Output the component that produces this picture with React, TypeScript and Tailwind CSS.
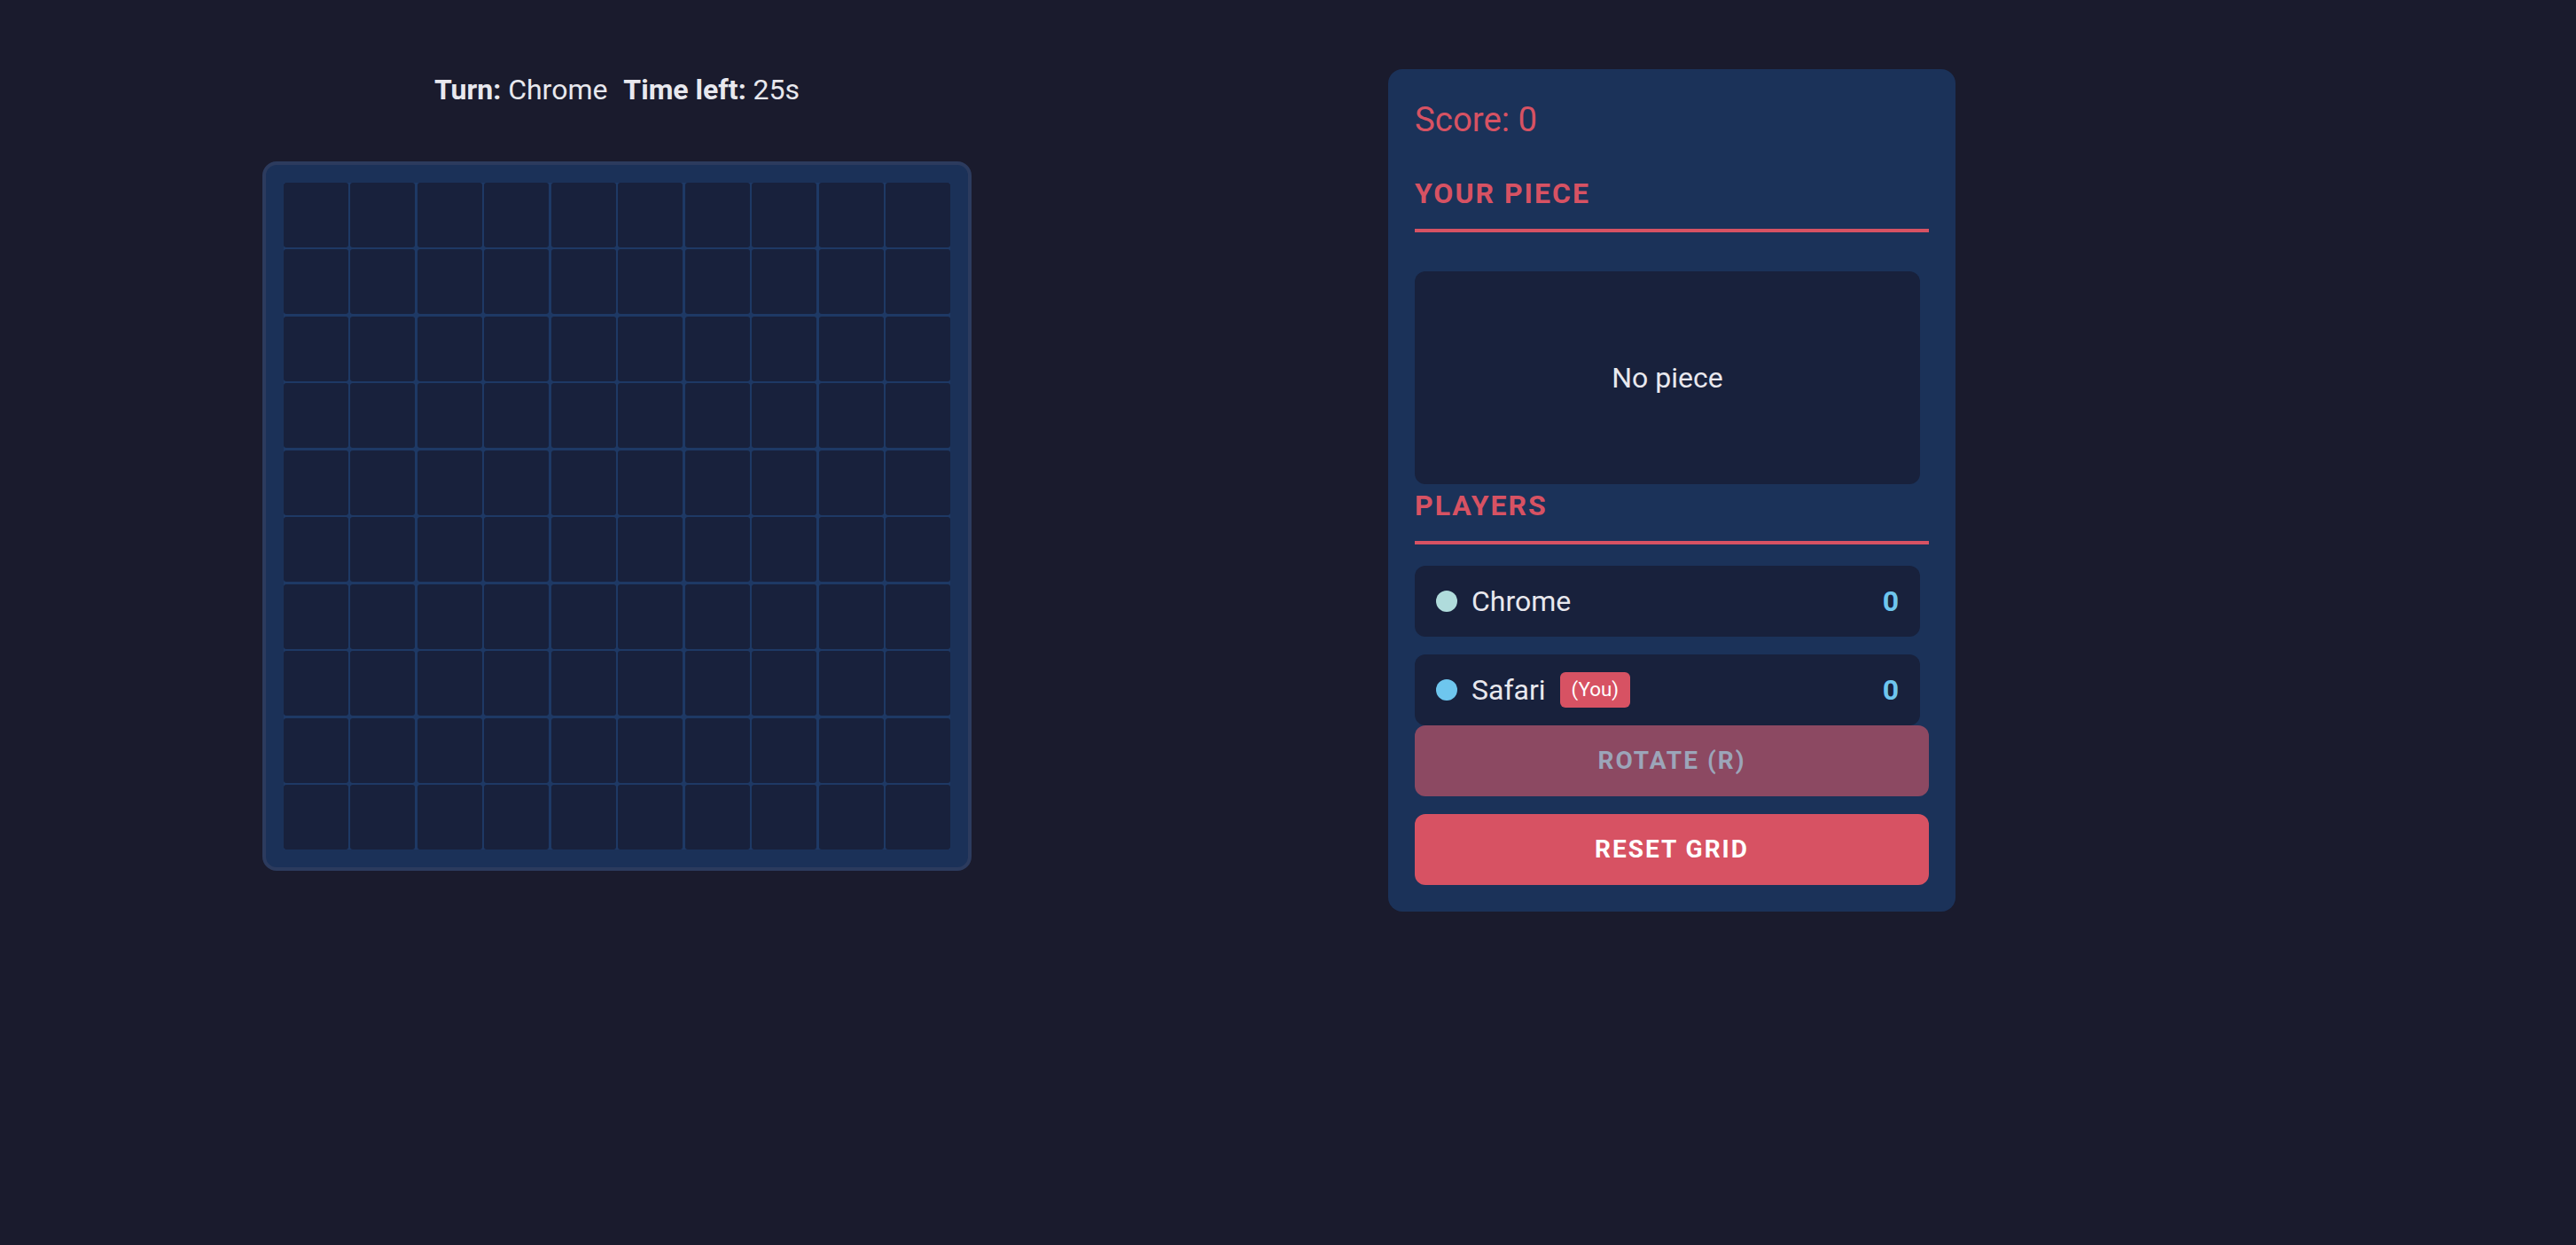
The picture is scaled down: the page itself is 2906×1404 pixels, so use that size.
import React from 'react';

const pink = 'text-[#d75263]';

type Player = { name: string; color: string; score: number; you?: boolean };

const players: Player[] = [
  { name: 'Chrome', color: 'bg-[#b0dcdc]', score: 0 },
  { name: 'Safari', color: 'bg-[#6ec6ee]', score: 0, you: true },
];

function Board() {
  const cells = Array.from({ length: 100 }, (_, i) => i);
  return (
    <div className="mt-[61px] h-[800px] w-[800px] rounded-[16px] border-4 border-[#2c3b5e] bg-[#1b3158] p-[20px]">
      <div className="grid h-full w-full grid-cols-10 grid-rows-10 gap-[2.5px] bg-[#1e3965]">
        {cells.map((i) => (
          <div key={i} className="rounded-[3px] bg-[#18213c]" />
        ))}
      </div>
    </div>
  );
}

function SectionTitle({ children, className = '' }: { children: React.ReactNode; className?: string }) {
  return (
    <h2
      className={`border-b-4 border-[#d75263] pb-[20px] text-[32px] font-bold uppercase leading-[40px] tracking-[2px] ${pink} ${className}`}
    >
      {children}
    </h2>
  );
}

function PlayerRow({ player }: { player: Player }) {
  return (
    <div className="flex h-[80px] w-[570px] items-center rounded-[12px] bg-[#18213c] px-6">
      <span className={`h-6 w-6 rounded-full ${player.color}`} />
      <span className="ml-4 text-[32px] leading-[40px] text-[#e8e8ee]">{player.name}</span>
      {player.you && (
        <span className="ml-4 flex h-[40px] items-center rounded-[6px] bg-[#d75263] px-[13px] text-[22.4px] text-white">
          (You)
        </span>
      )}
      <span className="ml-auto text-[32px] font-bold leading-[40px] text-[#6ec6ee]">{player.score}</span>
    </div>
  );
}

export default function App() {
  return (
    <div className="min-h-screen bg-[#1a1b2d] font-['Roboto',sans-serif] text-[#e8e8ee]">
      <div className="flex items-start">
        <div className="flex w-[1392px] flex-col items-center pt-[81px]">
          <p className="text-[32px] leading-[40px]">
            <span className="font-bold">Turn:</span> Chrome <span className="ml-[10px] font-bold">Time left:</span> 25s
          </p>
          <Board />
        </div>

        <aside className="ml-[174px] mt-[78px] w-[640px] rounded-[16px] bg-[#1b3259] p-[30px]">
          <div className={`mt-[4px] text-[38.4px] leading-[46px] ${pink}`}>Score: 0</div>

          <SectionTitle className="mt-[40px]">Your Piece</SectionTitle>
          <div className="mt-[44px] flex h-[240px] w-[570px] items-center justify-center rounded-[12px] bg-[#18213c] text-[32px] leading-[40px] text-[#e8e8ee]">
            No piece
          </div>

          <SectionTitle className="mt-[4px]">Players</SectionTitle>
          <div className="mt-[24px] flex flex-col gap-[20px]">
            {players.map((p) => (
              <PlayerRow key={p.name} player={p} />
            ))}
          </div>

          <button
            type="button"
            disabled
            className="flex h-[80px] w-full items-center justify-center rounded-[12px] bg-[#8c4962] text-[28px] font-bold uppercase tracking-[2px] text-[#9ca5b9]"
          >
            Rotate (R)
          </button>
          <button
            type="button"
            className="mt-[20px] flex h-[80px] w-full items-center justify-center rounded-[12px] bg-[#d75263] text-[28px] font-bold uppercase tracking-[2px] text-white"
          >
            Reset Grid
          </button>
        </aside>
      </div>
    </div>
  );
}
